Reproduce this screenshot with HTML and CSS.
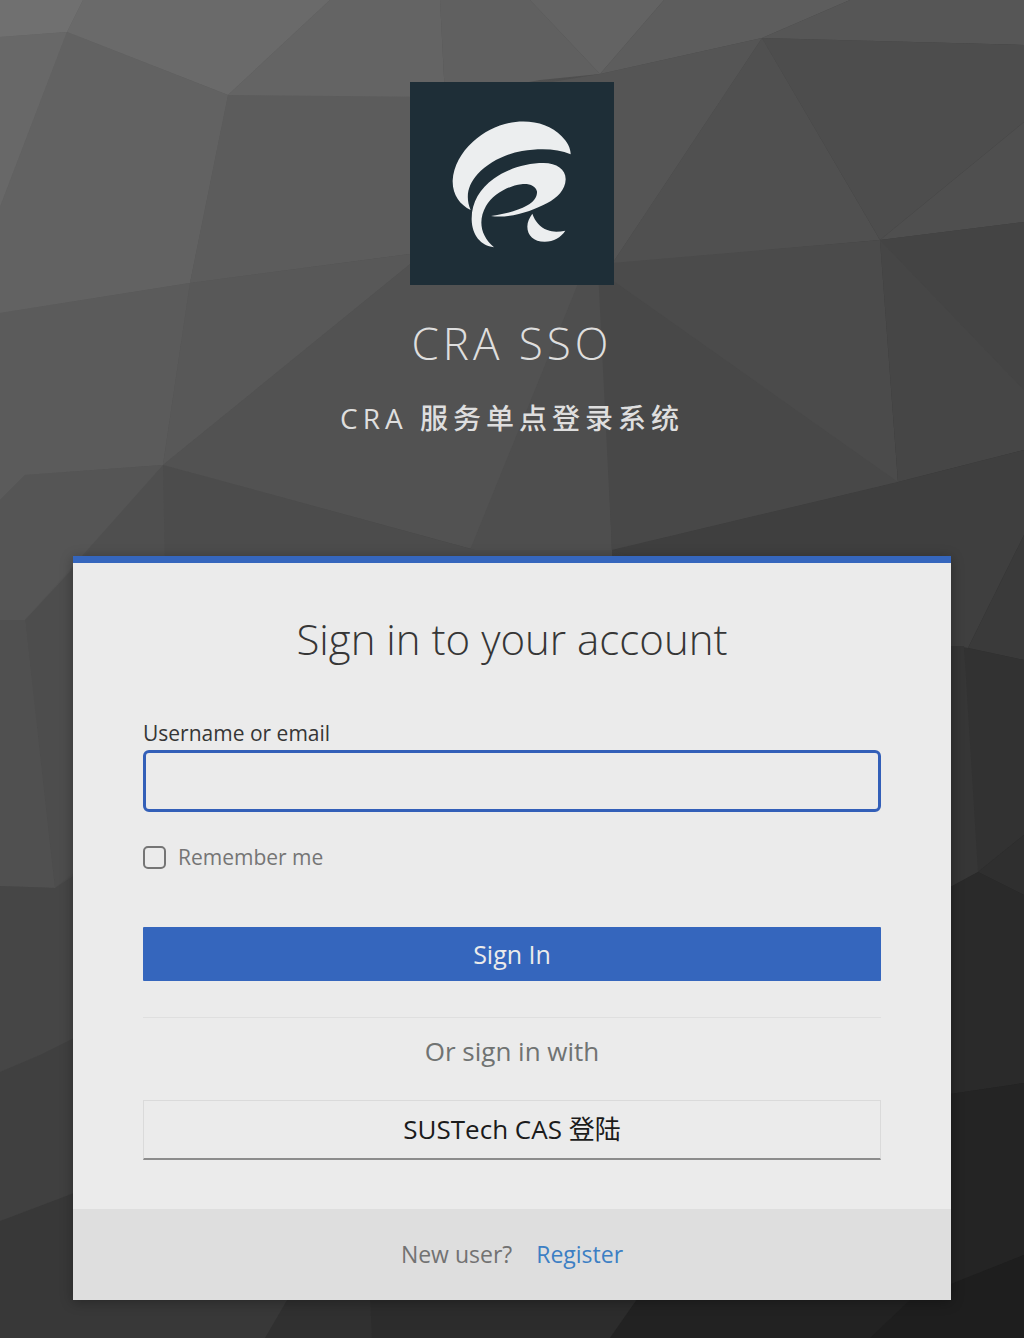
FILE: index.html
```html
<!DOCTYPE html>
<html lang="zh-CN">
<head>
<meta charset="utf-8">
<meta name="viewport" content="width=device-width, initial-scale=1">
<title>CRA SSO</title>
<link rel="stylesheet" href="styles.css">
</head>
<body>
<svg class="backdrop" viewBox="0 0 1024 1338" preserveAspectRatio="none" aria-hidden="true">
  <defs>
    <linearGradient id="base" x1="0" y1="0" x2="1" y2="1">
      <stop offset="0" stop-color="#666"/>
      <stop offset="1" stop-color="#1a1a1a"/>
    </linearGradient>
  </defs>
  <rect width="1024" height="1338" fill="url(#base)"/>
  <path fill="#707070" d="M0 0H83L67 32L0 37Z"/>
  <path fill="#6a6a6a" d="M83 0H330L228 95L67 32Z"/>
  <path fill="#686868" d="M0 37L67 32L0 207Z"/>
  <path fill="#626262" d="M67 32L228 95L190 283L0 313V207Z"/>
  <path fill="#646464" d="M330 0H440L445 97H240L228 95Z"/>
  <path fill="#606060" d="M440 0H530L600 74L540 80L445 97Z"/>
  <path fill="#636363" d="M530 0H664L600 74Z"/>
  <path fill="#5d5d5d" d="M664 0H850L762 38L600 74Z"/>
  <path fill="#5c5c5c" d="M228 95L445 97V250L410 254L190 283Z"/>
  <path fill="#5b5b5b" d="M0 313L190 283L163 465L25 475L0 500Z"/>
  <path fill="#585858" d="M190 283L425 252L163 465Z"/>
  <path fill="#525252" d="M425 252H600L475 550L163 465Z"/>
  <path fill="#4e4e4e" d="M590 254H600L612 550H470Z"/>
  <path fill="#555" d="M445 97L540 84L600 74L762 38L612 264H445Z"/>
  <path fill="#505050" d="M762 38L880 240L612 264Z"/>
  <path fill="#565656" d="M850 0H1024V45L762 38Z"/>
  <path fill="#4d4d4d" d="M762 38L1024 45V122L880 240Z"/>
  <path fill="#4f4f4f" d="M1024 122V222L880 240Z"/>
  <path fill="#4b4b4b" d="M600 264L880 240L898 482L612 550Z"/>
  <path fill="#484848" d="M598 270L898 482L612 550Z"/>
  <path fill="#464646" d="M880 240L1024 222V450L898 482Z"/>
  <path fill="#434343" d="M1024 222V390L880 240Z" opacity=".6"/>
  <path fill="#3f3f3f" d="M898 482L1024 450V535L968 648L880 640L612 550Z"/>
  <path fill="#4c4c4c" d="M163 465L475 550H612V640H60L75 560Z"/>
  <path fill="#4f4f4f" d="M163 465L165 570H60Z"/>
  <path fill="#555" d="M0 500L25 475L163 465L25 620H0Z"/>
  <path fill="#4d4d4d" d="M25 620L90 550V860L55 888Z"/>
  <path fill="#505050" d="M0 620H25L55 888L0 886Z"/>
  <path fill="#464646" d="M0 886L55 888L90 865V1032L40 1055L0 1072Z"/>
  <path fill="#404040" d="M0 1072L40 1055L90 1030V1187L0 1221Z"/>
  <path fill="#383838" d="M0 1221L90 1187L290 1300L265 1338H0Z"/>
  <path fill="#303030" d="M290 1295H370L372 1338H265Z"/>
  <path fill="#2c2c2c" d="M370 1295H640L610 1338H372Z"/>
  <path fill="#222" d="M640 1295H920L880 1338H610Z"/>
  <path fill="#3a3a3a" d="M1024 535V660L968 648Z"/>
  <path fill="#323232" d="M930 645L968 648L1024 660V835L978 872L930 898Z"/>
  <path fill="#363636" d="M930 646H964L978 872L930 898Z"/>
  <path fill="#2f2f2f" d="M1024 835V895L978 872Z"/>
  <path fill="#2a2a2a" d="M930 898L978 872L1024 895V1083L930 1097Z"/>
  <path fill="#242424" d="M930 1097L1024 1083V1255L930 1294Z"/>
  <path fill="#1e1e1e" d="M910 1300L1024 1255V1338H870Z"/>
</svg>

<div class="page">
  <header class="brand">
    <svg class="logo" viewBox="30 37 612 606" preserveAspectRatio="none" role="img" aria-label="CRA">
      <rect x="30" y="37" width="612" height="606" fill="#1e2e37"/>
      <g fill="#eceeef">
        <path d="M212 419C180 403 157 374 158 331C160 288 184 247 218 216C260 178 313 155 370 155C416 155 456 170 485 199C502 216 512 234 512 253C472 235 420 234 366 243C315 252 265 277 233 312C204 344 195 380 212 419Z"/>
        <path d="M282 530C242 526 216 493 215 448C214 396 240 356 281 326C322 296 379 279 431 279C470 279 497 298 497 327C496 359 472 382 442 398C399 421 330 445 273 437C315 431 352 422 381 406C401 395 412 379 411 364C407 347 388 339 364 342C323 347 278 374 258 407C233 451 242 496 282 530Z"/>
        <path d="M397 430C405 453 420 470 442 479C460 486 477 484 496 481C482 501 462 514 434 514C401 513 382 495 382 468C382 454 389 441 397 430Z"/>
      </g>
    </svg>
    <h1 class="brand-title">CRA SSO</h1>
    <p class="brand-subtitle">CRA 服务单点登录系统</p>
  </header>

  <main class="card">
    <div class="card-body">
      <h2 class="card-title">Sign in to your account</h2>
      <form class="form">
        <label class="field-label" for="username">Username or email</label>
        <input class="field-input" id="username" name="username" type="text" autocomplete="username">
        <div class="remember">
          <input class="checkbox" id="remember" name="remember" type="checkbox">
          <label for="remember">Remember me</label>
        </div>
        <button class="submit" type="submit">Sign In</button>
      </form>
      <section class="providers">
        <h3 class="providers-title">Or sign in with</h3>
        <a class="provider" href="#cas">SUSTech CAS 登陆</a>
      </section>
    </div>
    <footer class="card-footer">
      <span>New user?</span>
      <a class="register" href="#register">Register</a>
    </footer>
  </main>
</div>
</body>
</html>
```
FILE: styles.css
```css
* {
  box-sizing: border-box;
}

body {
  margin: 0;
  background: #333;
  color: #363636;
  font-family: "Open Sans", "Noto Sans CJK SC", sans-serif;
}

h1,
h2,
h3,
p {
  margin: 0;
  font-weight: 400;
}

.backdrop {
  position: absolute;
  inset: 0;
  z-index: -1;
  width: 100%;
  height: 100%;
}

.page {
  position: relative;
  min-height: 100vh;
  padding: 82px 73px 38px;
}

.brand {
  display: flex;
  flex-direction: column;
  align-items: center;
  color: #dedede;
  text-align: center;
}

.logo {
  display: block;
  width: 204px;
  height: 203px;
}

.brand-title {
  margin-top: 28px;
  font-size: 44px;
  font-weight: 300;
  line-height: 60px;
  letter-spacing: 4px;
}

.brand-subtitle {
  margin-top: 25px;
  font-size: 28px;
  font-weight: 500;
  line-height: 40px;
  letter-spacing: 5px;
}

.card {
  margin-top: 118px;
  border-top: 7px solid #3566bd;
  background: #ebebeb;
  box-shadow: 0 2px 12px rgba(0, 0, 0, 0.3);
}

.card-body {
  padding: 46px 70px 49px;
}

.card-title {
  font-size: 42px;
  font-weight: 300;
  line-height: 60px;
  text-align: center;
}

.form {
  display: flex;
  flex-direction: column;
  margin-top: 48px;
}

.field-label {
  font-size: 21px;
  line-height: 32px;
}

.field-input {
  width: 100%;
  height: 62px;
  margin-top: 1px;
  padding: 0 16px;
  border: 3px solid #335fb8;
  border-radius: 6px;
  outline: 0;
  background: #ebebeb;
  color: inherit;
  font: inherit;
  font-size: 24px;
}

.remember {
  display: flex;
  align-items: center;
  gap: 12px;
  margin-top: 30px;
  color: #757575;
  font-size: 21px;
  line-height: 30px;
}

.checkbox {
  appearance: none;
  width: 23px;
  height: 23px;
  margin: 0;
  border: 2px solid #757575;
  border-radius: 5px;
}

.checkbox:checked {
  background: #3566bd;
}

.submit {
  height: 54px;
  margin-top: 55px;
  padding: 0;
  border: 0;
  border-radius: 1px;
  background: #3566bd;
  color: #ebebeb;
  font: inherit;
  font-size: 25px;
  line-height: 54px;
}

.providers {
  margin-top: 36px;
  border-top: 1px solid #dfdfdf;
}

.providers-title {
  margin-top: 13px;
  color: #707372;
  font-size: 26px;
  line-height: 40px;
  text-align: center;
}

.provider {
  display: block;
  margin-top: 29px;
  border: 1px solid #dadada;
  border-bottom: 2px solid #8c8c8c;
  color: #1b1b1b;
  font-size: 26px;
  line-height: 57px;
  text-align: center;
  text-decoration: none;
}

.card-footer {
  display: flex;
  justify-content: center;
  gap: 24px;
  padding: 28px 70px;
  background: #dedede;
  color: #727272;
  font-size: 23px;
  line-height: 35px;
}

.register {
  color: #3c7fc4;
  text-decoration: none;
}
```
